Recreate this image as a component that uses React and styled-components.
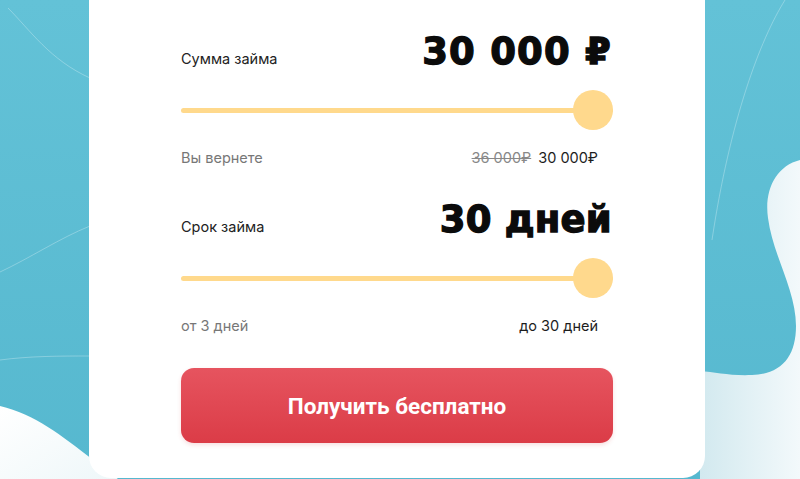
import React from 'react'
import styled, { createGlobalStyle } from 'styled-components'

const Global = createGlobalStyle`
  html, body {
    margin: 0;
    padding: 0;
    background: #5dbdd3;
  }
  body {
    font-family: Inter, Roboto, "Liberation Sans", sans-serif;
  }
`

const Page = styled.div`
  position: relative;
  width: 800px;
  height: 479px;
  overflow: hidden;
  background: #5dbdd3;
`

const Backdrop = styled.svg`
  position: absolute;
  inset: 0;
  width: 800px;
  height: 479px;
  z-index: 0;
`

const Card = styled.div`
  position: relative;
  z-index: 1;
  box-sizing: border-box;
  width: 616px;
  margin-left: 89px;
  padding: 28px 92px 35px;
  background: #fff;
  border-radius: 0 0 22px 22px;
  display: flex;
  flex-direction: column;
`

const Block = styled.div`
  display: flex;
  flex-direction: column;
  & + & {
    margin-top: 29px;
  }
`

const Header = styled.div`
  display: flex;
  justify-content: space-between;
  align-items: baseline;
  height: 48px;
`

const Label = styled.span`
  font-size: 14.5px;
  color: #222;
`

const Value = styled.span`
  font-family: "DejaVu Sans", Roboto, sans-serif;
  font-weight: 700;
  font-size: 37px;
  line-height: 48px;
  color: #0b0b0b;
  letter-spacing: ${(p) => (p.wide ? '1.2px' : '0.2px')};
  -webkit-text-stroke: 1.3px #0b0b0b;
  padding-right: 1px;
`

const SliderWrap = styled.div`
  position: relative;
  height: 40px;
  margin-top: 14px;
  display: flex;
  align-items: center;
`

const Track = styled.div`
  width: calc(100% + 3px);
  height: 5px;
  border-radius: 3px;
  background: #ffd98c;
`

const Thumb = styled.div`
  position: absolute;
  top: 0;
  width: 40px;
  height: 40px;
  border-radius: 50%;
  background: #ffd98d;
`

const Sub = styled.div`
  display: flex;
  justify-content: space-between;
  align-items: center;
  height: 20px;
  margin-top: 17px;
  padding-right: 15px;
  font-size: 14.5px;
`

const Muted = styled.span`
  color: #777;
`

const Dark = styled.span`
  color: #1d1d1d;
`

const Old = styled.span`
  color: #888;
  text-decoration: line-through;
  margin-right: 7px;
`

const Button = styled.button`
  margin-top: 33px;
  height: 75px;
  border: none;
  border-radius: 13px;
  background: linear-gradient(180deg, #e6545f 0%, #db3c47 100%);
  box-shadow: 0 2px 4px rgba(200, 40, 50, 0.15);
  color: #fff;
  font-family: Roboto, "Liberation Sans", sans-serif;
  font-weight: 700;
  font-size: 22.5px;
  cursor: pointer;
`

function Slider({ value }) {
  return (
    <SliderWrap>
      <Track />
      <Thumb style={{ left: `calc((100% - 40px) * ${value})` }} />
    </SliderWrap>
  )
}

function Background() {
  return (
    <Backdrop viewBox="0 0 800 479" preserveAspectRatio="none">
      <defs>
        <linearGradient id="teal" x1="0" y1="0" x2="0" y2="1">
          <stop offset="0" stopColor="#63c2d7" />
          <stop offset="1" stopColor="#56b8cf" />
        </linearGradient>
        <linearGradient id="light" x1="0" y1="0" x2="1" y2="0">
          <stop offset="0" stopColor="#d2e9ef" />
          <stop offset="1" stopColor="#f3f9fb" />
        </linearGradient>
        <linearGradient id="white" x1="0" y1="0" x2="1" y2="1">
          <stop offset="0" stopColor="#ffffff" />
          <stop offset="1" stopColor="#eef7f9" />
        </linearGradient>
      </defs>
      <rect x="0" y="0" width="800" height="479" fill="url(#teal)" />
      <path
        d="M800,160 C776,166 764,190 768,218 C773,256 796,290 796,326 C796,356 782,374 752,375 C730,376 715,372 700,371 L700,479 L800,479 Z"
        fill="url(#light)"
      />
      <path d="M0,406 C35,414 62,436 92,459 L118,479 L0,479 Z" fill="url(#white)" />
      <g fill="none" stroke="rgba(255,255,255,0.28)" strokeWidth="1">
        <path d="M8,8 C30,30 50,60 90,78" />
        <path d="M0,272 C30,258 60,238 90,226" />
        <path d="M0,360 C30,356 60,356 90,356" />
        <path d="M785,0 C760,40 730,120 712,240" />
      </g>
    </Backdrop>
  )
}

export default function App() {
  return (
    <Page>
      <Global />
      <Background />
      <Card>
        <Block>
          <Header>
            <Label>Сумма займа</Label>
            <Value wide>30&nbsp;000&nbsp;₽</Value>
          </Header>
          <Slider value={1} />
          <Sub>
            <Muted>Вы вернете</Muted>
            <span>
              <Old>36&nbsp;000₽</Old>
              <Dark>30&nbsp;000₽</Dark>
            </span>
          </Sub>
        </Block>
        <Block>
          <Header>
            <Label>Срок займа</Label>
            <Value>30&nbsp;дней</Value>
          </Header>
          <Slider value={1} />
          <Sub>
            <Muted>от 3 дней</Muted>
            <Dark>до 30 дней</Dark>
          </Sub>
        </Block>
        <Button>Получить бесплатно</Button>
      </Card>
    </Page>
  )
}
